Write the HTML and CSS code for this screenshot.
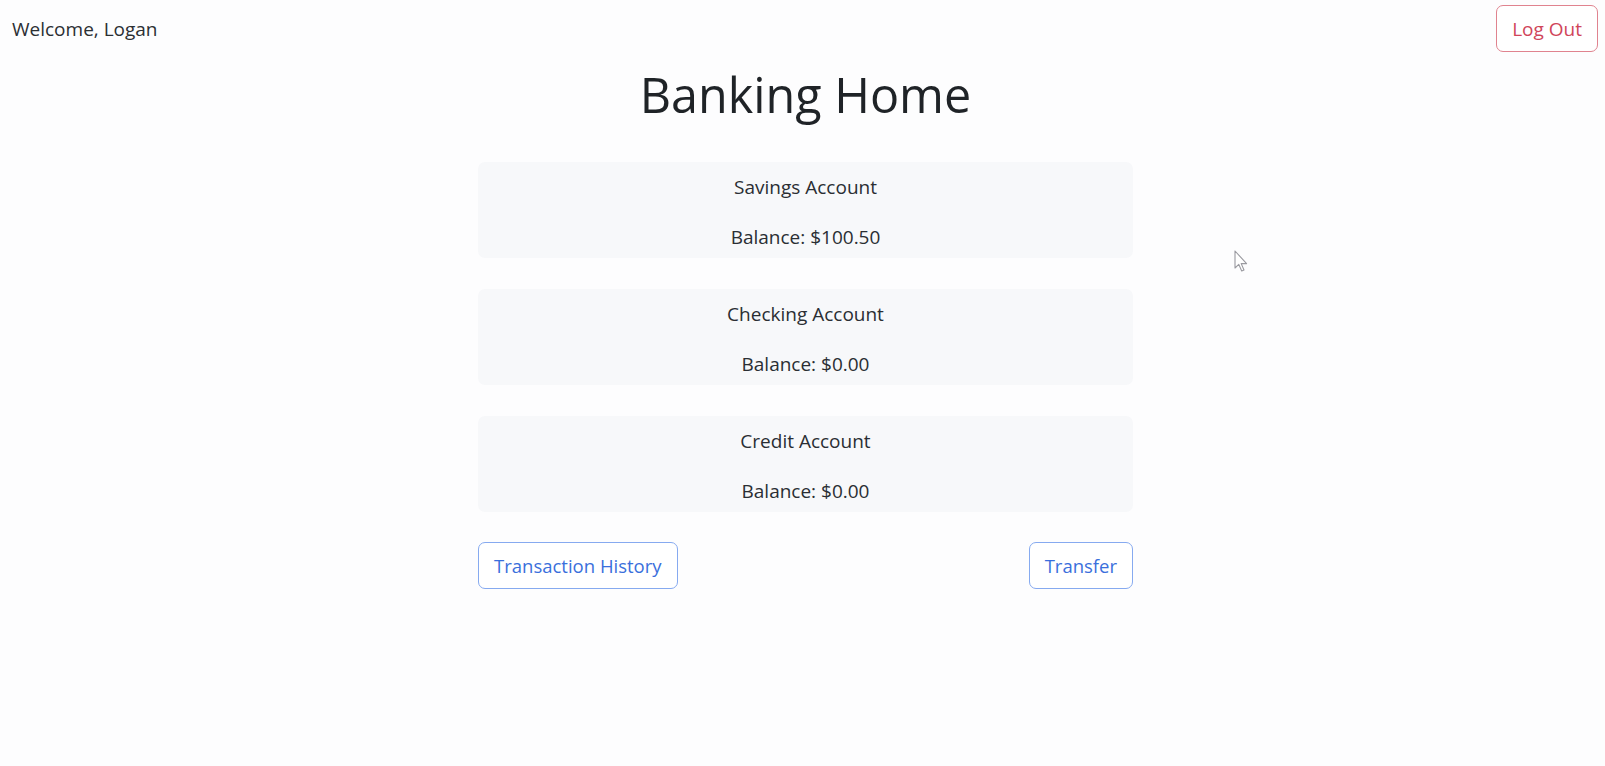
FILE: index.html
```html
<!DOCTYPE html>
<html lang="en">
<head>
<meta charset="utf-8">
<title>Banking Home</title>
<link rel="stylesheet" href="styles.css">
</head>
<body>
<header class="topbar">
  <span class="welcome">Welcome, Logan</span>
  <button class="btn btn-danger">Log Out</button>
</header>
<main class="page">
  <h1 class="title">Banking Home</h1>
  <section class="accounts">
    <div class="account">
      <p class="account-name">Savings Account</p>
      <p class="account-balance">Balance: $100.50</p>
    </div>
    <div class="account">
      <p class="account-name">Checking Account</p>
      <p class="account-balance">Balance: $0.00</p>
    </div>
    <div class="account">
      <p class="account-name">Credit Account</p>
      <p class="account-balance">Balance: $0.00</p>
    </div>
    <div class="actions">
      <button class="btn btn-primary">Transaction History</button>
      <button class="btn btn-primary">Transfer</button>
    </div>
  </section>
</main>
<svg class="cursor" width="15" height="23" viewBox="0 0 15 23" aria-hidden="true">
  <path d="M1 1 L1 18 L4.8 14.4 L7.7 21 L10 20 L7.2 13.6 L12.6 13.6 Z" fill="#ffffff" stroke="#9a9aa0" stroke-width="1.1" stroke-linejoin="round"/>
</svg>
</body>
</html>
```
FILE: styles.css
```css
* { box-sizing: border-box; }

html, body {
  margin: 0;
  padding: 0;
}

body {
  background: #fdfdfe;
  color: #212529;
  font-family: "Open Sans", "Noto Sans", "Liberation Sans", sans-serif;
  font-size: 19px;
  line-height: 30px;
  min-height: 766px;
  position: relative;
}

.topbar {
  display: flex;
  justify-content: space-between;
  align-items: center;
  padding: 5px 7px 0 12px;
}

.welcome {
  color: #2b2f33;
}

.btn {
  font-family: inherit;
  font-size: 19px;
  line-height: 30px;
  padding: 7.5px 15px;
  border-radius: 7px;
  background: #ffffff;
  cursor: pointer;
}

.btn-danger {
  color: #d0455a;
  border: 1.5px solid #e0838f;
}

.btn-primary {
  font-size: 18.5px;
  padding: 7.5px 15px;
  color: #3a6fdc;
  border: 1.5px solid #86aaf0;
}

.page {
  display: flex;
  flex-direction: column;
  align-items: center;
  padding-left: 6px;
}

.title {
  font-size: 48.5px;
  font-weight: 400;
  line-height: 60px;
  margin: 12px 0 38px;
  color: #1f2327;
}

.accounts {
  width: 655px;
  display: flex;
  flex-direction: column;
  gap: 31px;
}

.account {
  background: #f7f8fa;
  border-radius: 7px;
  padding: 10px 0 6px;
  text-align: center;
}

.account p {
  margin: 0;
  color: #2a2e33;
}

.account-name {
  margin-bottom: 20px !important;
}

.actions {
  display: flex;
  justify-content: space-between;
  margin-top: -1px;
}

.cursor {
  position: absolute;
  left: 1234px;
  top: 250px;
}
```
